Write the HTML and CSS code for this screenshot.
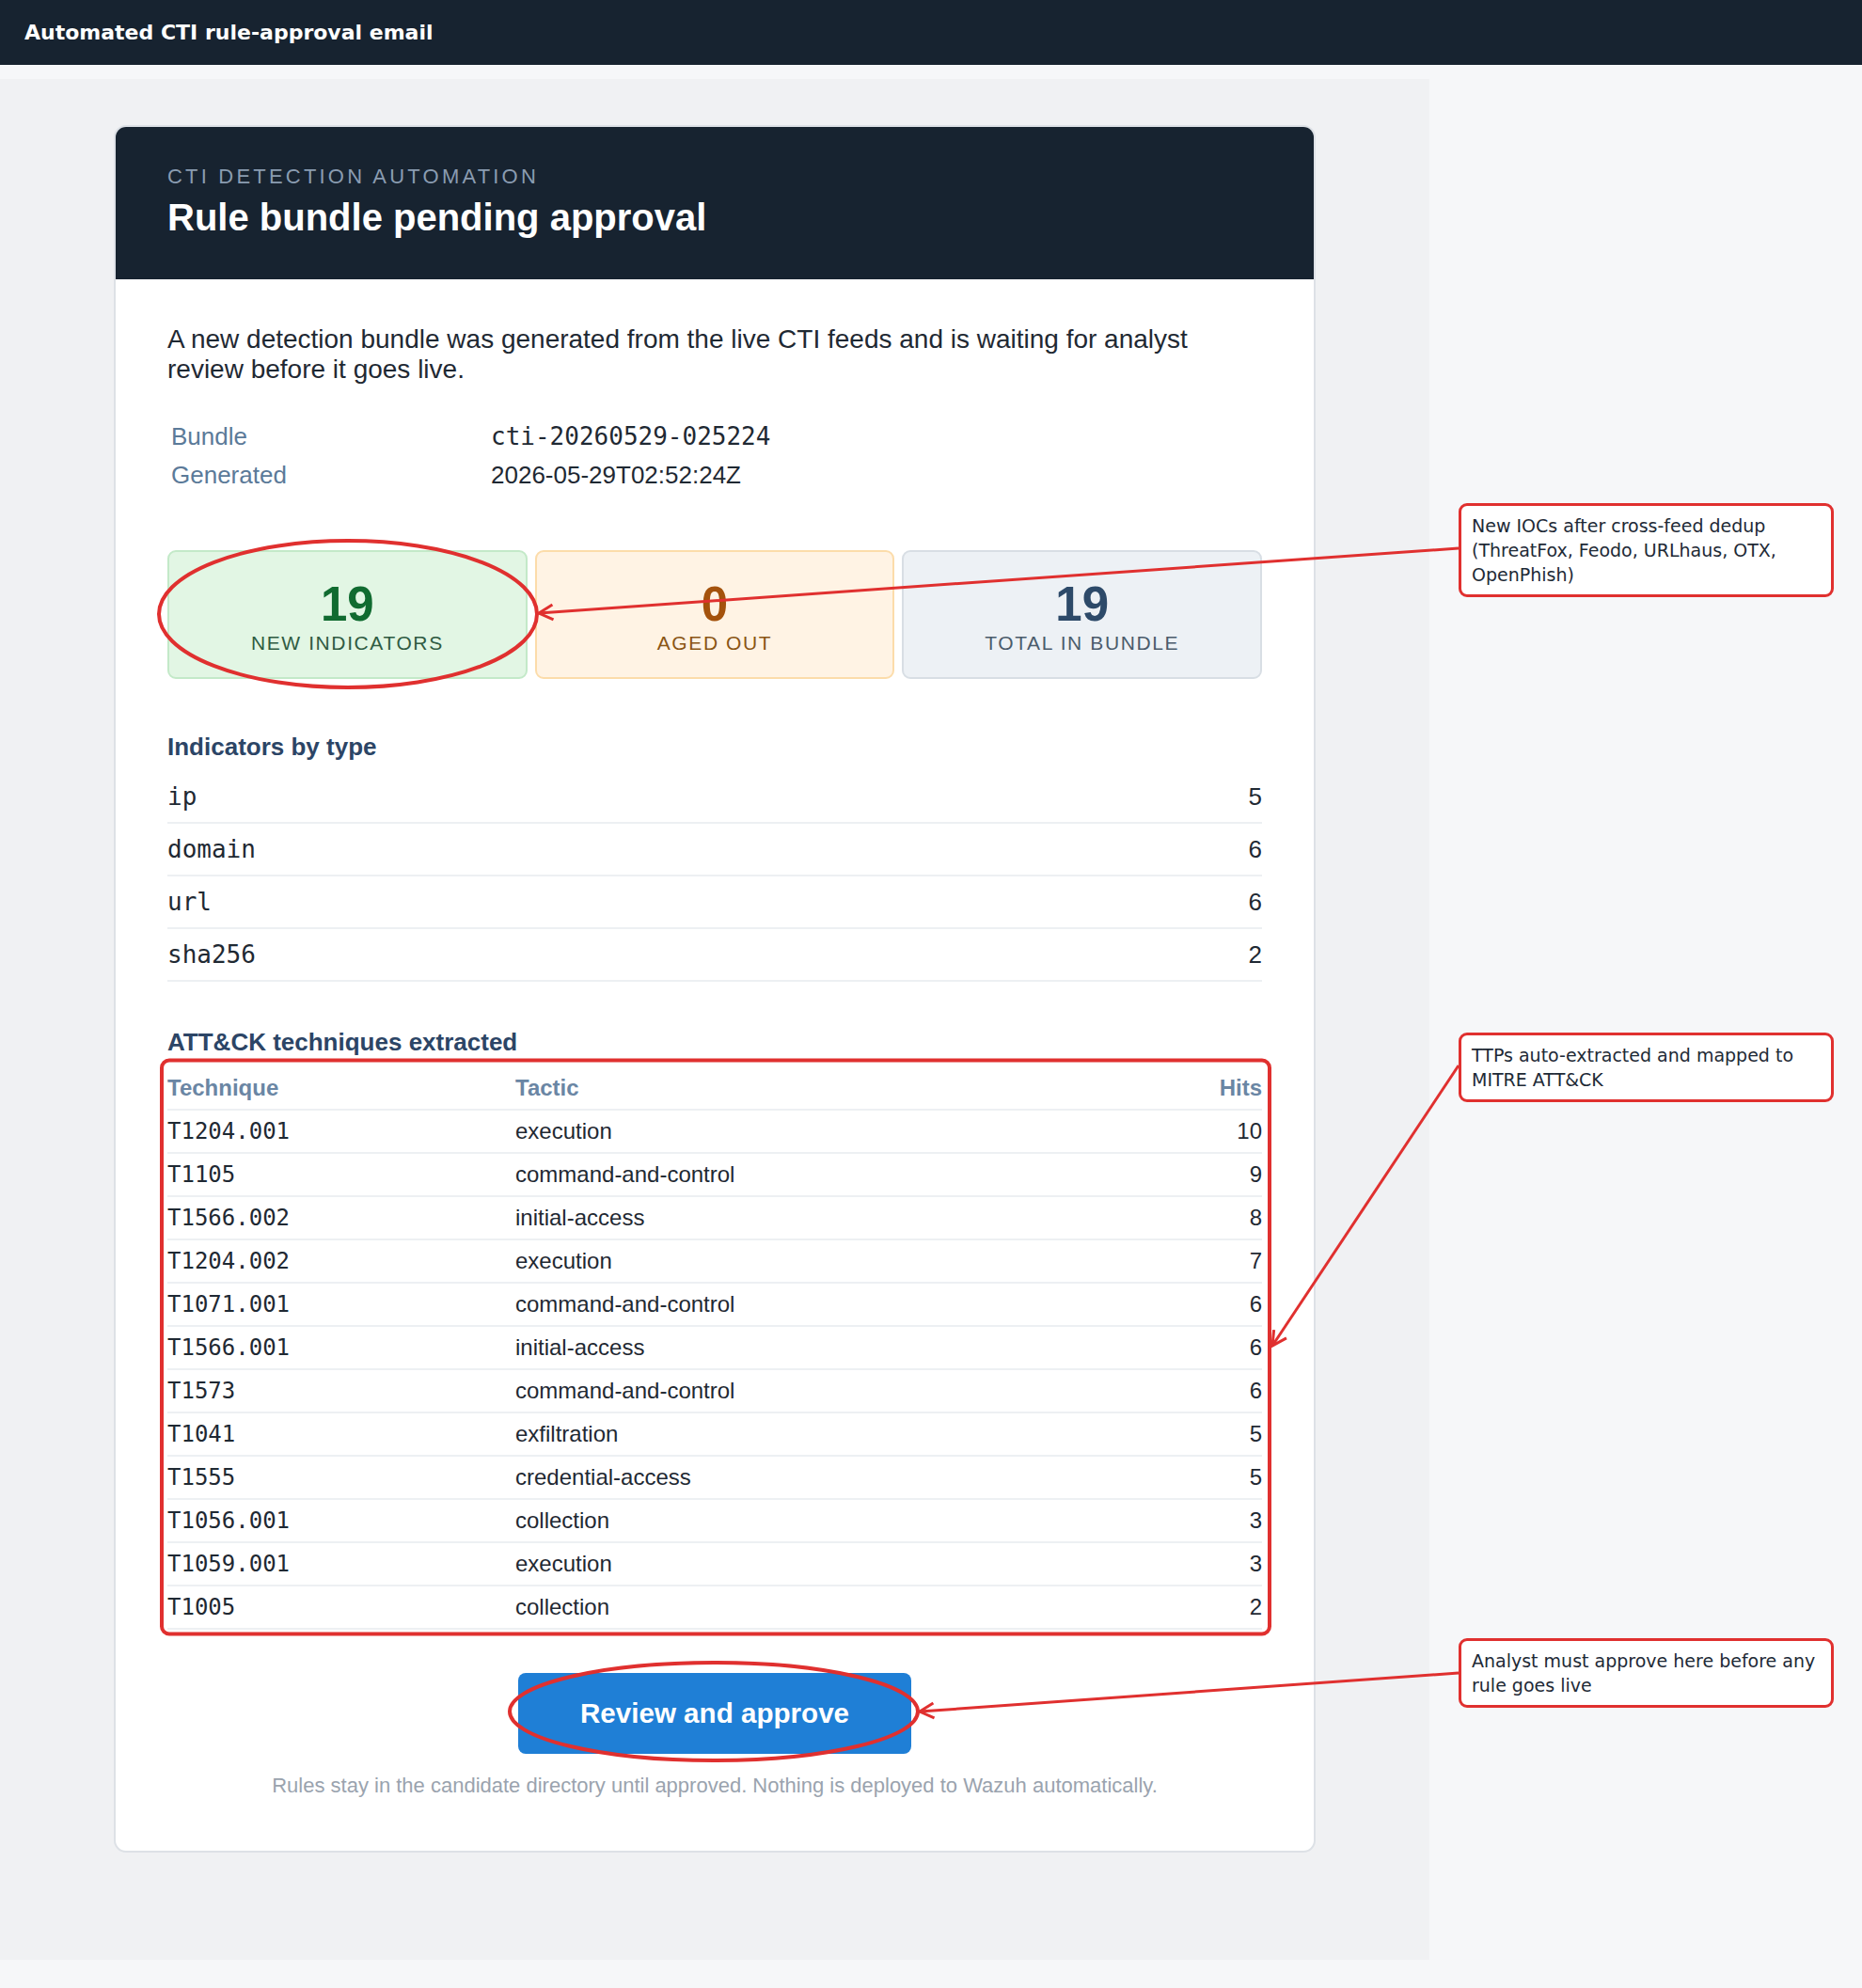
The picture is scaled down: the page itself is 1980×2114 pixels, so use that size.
FILE: index.html
```html
<!DOCTYPE html>
<html lang="en">
<head>
  <meta charset="UTF-8">
  <meta name="viewport" content="width=device-width, initial-scale=1.0">
  <title>Automated CTI rule-approval email</title>
  <link rel="stylesheet" href="styles.css">
</head>
<body>

  <!-- Title bar -->
  <div class="topbar">Automated CTI rule-approval email</div>

  <!-- Email preview -->
  <div class="mail-frame">
    <div class="mail">
      <div class="mail-head">
        <div class="eyebrow">CTI DETECTION AUTOMATION</div>
        <h1>Rule bundle pending approval</h1>
      </div>

      <div class="mail-body">
        <p class="intro">A new detection bundle was generated from the live CTI feeds and is waiting for analyst review before it goes live.</p>

        <div class="meta">
          <span class="meta-label">Bundle</span><span class="mono">cti-20260529-025224</span>
          <span class="meta-label">Generated</span><span>2026-05-29T02:52:24Z</span>
        </div>

        <div class="stats">
          <div class="stat stat-new">
            <div class="stat-num">19</div>
            <div class="stat-label">NEW INDICATORS</div>
          </div>
          <div class="stat stat-aged">
            <div class="stat-num">0</div>
            <div class="stat-label">AGED OUT</div>
          </div>
          <div class="stat stat-total">
            <div class="stat-num">19</div>
            <div class="stat-label">TOTAL IN BUNDLE</div>
          </div>
        </div>

        <h2>Indicators by type</h2>
        <table class="types">
          <tr><td class="mono">ip</td><td class="num">5</td></tr>
          <tr><td class="mono">domain</td><td class="num">6</td></tr>
          <tr><td class="mono">url</td><td class="num">6</td></tr>
          <tr><td class="mono">sha256</td><td class="num">2</td></tr>
        </table>

        <h2 class="ttp-title">ATT&amp;CK techniques extracted</h2>
        <table class="ttp">
          <thead>
            <tr><th class="col-tech">Technique</th><th>Tactic</th><th class="num">Hits</th></tr>
          </thead>
          <tbody>
            <tr><td class="mono">T1204.001</td><td>execution</td><td class="num">10</td></tr>
            <tr><td class="mono">T1105</td><td>command-and-control</td><td class="num">9</td></tr>
            <tr><td class="mono">T1566.002</td><td>initial-access</td><td class="num">8</td></tr>
            <tr><td class="mono">T1204.002</td><td>execution</td><td class="num">7</td></tr>
            <tr><td class="mono">T1071.001</td><td>command-and-control</td><td class="num">6</td></tr>
            <tr><td class="mono">T1566.001</td><td>initial-access</td><td class="num">6</td></tr>
            <tr><td class="mono">T1573</td><td>command-and-control</td><td class="num">6</td></tr>
            <tr><td class="mono">T1041</td><td>exfiltration</td><td class="num">5</td></tr>
            <tr><td class="mono">T1555</td><td>credential-access</td><td class="num">5</td></tr>
            <tr><td class="mono">T1056.001</td><td>collection</td><td class="num">3</td></tr>
            <tr><td class="mono">T1059.001</td><td>execution</td><td class="num">3</td></tr>
            <tr><td class="mono">T1005</td><td>collection</td><td class="num">2</td></tr>
          </tbody>
        </table>

        <div class="cta"><a class="btn" href="#">Review and approve</a></div>
        <p class="footnote">Rules stay in the candidate directory until approved. Nothing is deployed to Wazuh automatically.</p>
      </div>
    </div>
  </div>

  <!-- Annotation marks -->
  <svg class="marks" width="1980" height="2114" viewBox="0 0 1980 2114">
    <defs>
      <marker id="tip" markerUnits="userSpaceOnUse" markerWidth="24" markerHeight="24" refX="18" refY="10" orient="auto" overflow="visible">
        <path d="M3 2 L18 10 L3 18" fill="none" stroke="#e0302f" stroke-width="3"/>
      </marker>
    </defs>
    <ellipse cx="370" cy="653" rx="201" ry="78"/>
    <rect x="172" y="1127.5" width="1178" height="610" rx="8"/>
    <ellipse cx="759" cy="1820" rx="217" ry="52"/>
    <line x1="1551" y1="583" x2="573" y2="652" marker-end="url(#tip)"/>
    <line x1="1551" y1="1133" x2="1353" y2="1431" marker-end="url(#tip)"/>
    <line x1="1551" y1="1779" x2="978" y2="1820" marker-end="url(#tip)"/>
  </svg>

  <div class="callout callout-iocs">New IOCs after cross-feed dedup<br>(ThreatFox, Feodo, URLhaus, OTX,<br>OpenPhish)</div>
  <div class="callout callout-ttps">TTPs auto-extracted and mapped to<br>MITRE ATT&amp;CK</div>
  <div class="callout callout-cta">Analyst must approve here before any<br>rule goes live</div>

</body>
</html>
```

FILE: styles.css
```css
body {
  margin: 0;
  min-height: 2114px;
  position: relative;
  background: #f6f7f9;
  font-family: 'Liberation Sans', Arial, sans-serif;
}

.topbar {
  height: 69px;
  padding-left: 26px;
  background: #172330;
  color: #fff;
  font: bold 22px/70px 'DejaVu Sans', sans-serif;
}

.mail-frame {
  margin-top: 15px;
  width: 1520px;
  height: 2000px;
  box-sizing: border-box;
  padding-top: 49px;
  background: #f0f1f3;
}

.mail {
  width: 1278px;
  margin: 0 auto;
  box-sizing: border-box;
  background: #fff;
  border: 2px solid #dde1e6;
  border-radius: 13px;
  overflow: hidden;
}

.mail-head {
  background: #172330;
  padding: 40px 55px 42px;
}

.eyebrow {
  font-size: 22px;
  line-height: 26px;
  letter-spacing: 3.2px;
  color: #8a9cb1;
}

h1 {
  margin: 6px 0 0;
  font-size: 40px;
  line-height: 48px;
  color: #fff;
}

.mail-body {
  padding: 48px 55px 56px;
  font-size: 26px;
  color: #1f2933;
}

.intro {
  margin: 0;
  max-width: 1150px;
  font-size: 28px;
  line-height: 32px;
}

.mono {
  font-family: 'DejaVu Sans Mono', monospace;
}

.meta {
  margin-top: 40px;
  display: grid;
  grid-template-columns: 344px 1fr;
  row-gap: 10px;
  line-height: 31px;
}

.meta-label {
  padding-left: 4px;
  color: #5b7a99;
}

/* stat tiles */
.stats {
  margin-top: 64px;
  display: flex;
  gap: 8px;
}

.stat {
  flex: 1;
  border: 2px solid;
  border-radius: 9px;
  padding: 27px 0 23px;
  text-align: center;
}

.stat-num {
  font-size: 51px;
  line-height: 57px;
  font-weight: bold;
}

.stat-label {
  font-size: 21px;
  line-height: 26px;
  letter-spacing: 1.6px;
}

.stat-new { background: #e2f6e4; border-color: #c3e9c8; }
.stat-new .stat-num { color: #106b30; }
.stat-new .stat-label { color: #2f5b42; }

.stat-aged { background: #fff3e4; border-color: #fcdcaa; }
.stat-aged .stat-num { color: #a4520c; }
.stat-aged .stat-label { color: #8a5514; }

.stat-total { background: #edf1f5; border-color: #d8dee4; }
.stat-total .stat-num { color: #2d4a69; }
.stat-total .stat-label { color: #4b5b6b; }

h2 {
  margin: 57px 0 10px;
  font-size: 26px;
  line-height: 31px;
  color: #2c4566;
}

h2.ttp-title {
  margin: 49px 0 11px;
}

table {
  width: 100%;
  border-collapse: collapse;
}

.types td {
  padding: 12px 0 11px;
  line-height: 31px;
  border-bottom: 2px solid #edf0f3;
}

.num {
  text-align: right;
}

.ttp th,
.ttp td {
  padding: 8px 0;
  font-size: 24px;
  line-height: 28px;
  border-bottom: 2px solid #edf0f3;
}

.ttp th {
  text-align: left;
  color: #6a86a4;
}

.ttp th.num {
  text-align: right;
}

.ttp .col-tech {
  width: 370px;
}

.cta {
  margin-top: 46px;
  text-align: center;
}

.btn {
  display: inline-block;
  padding: 25px 66px;
  border-radius: 8px;
  background: #1f7fd6;
  color: #fff;
  font-size: 29.6px;
  line-height: 36px;
  font-weight: bold;
  text-decoration: none;
}

.footnote {
  margin: 21px 0 0;
  text-align: center;
  font-size: 22px;
  line-height: 26px;
  color: #9aa3ae;
}

/* red annotation layer */
.marks {
  position: absolute;
  top: 0;
  left: 0;
  pointer-events: none;
}

.marks ellipse,
.marks rect {
  fill: none;
  stroke: #e0302f;
  stroke-width: 4;
}

.marks line {
  stroke: #e0302f;
  stroke-width: 3;
}

.callout {
  position: absolute;
  left: 1551px;
  width: 399px;
  box-sizing: border-box;
  padding: 8px 11px;
  background: #fff;
  border: 3px solid #e0302f;
  border-radius: 9px;
  font: 19px/26px 'DejaVu Sans', sans-serif;
  color: #1e2a36;
}

.callout-iocs { top: 535px; }
.callout-ttps { top: 1098px; }
.callout-cta { top: 1742px; }
```
